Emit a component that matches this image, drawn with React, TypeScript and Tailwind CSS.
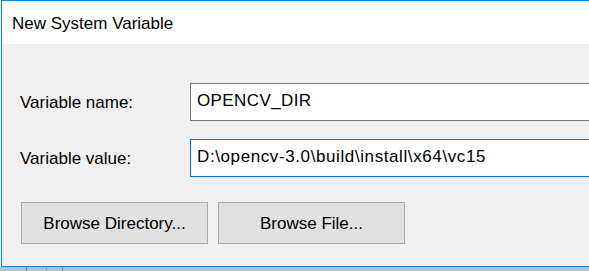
export default function App() {
  return (
    <div className="relative h-[271px] w-[589px] overflow-hidden bg-[#bdbdbd] font-['Liberation_Sans',Arial,sans-serif] text-[17px] leading-[19px] text-black">
      {/* background window edges peeking out below */}
      <div className="absolute bottom-0 left-[26px] h-[4px] w-px bg-[#8a8a8a]" />
      <div className="absolute bottom-0 left-[46px] h-[4px] w-px bg-[#a0a0a0]" />
      <div className="absolute bottom-0 left-[62px] h-[4px] w-px bg-[#8a8a8a]" />
      <div className="absolute left-0 top-0 h-[267px] w-px bg-[#e9eef3]" />

      <div className="ml-px flex h-[267px] flex-col border-b border-l border-t border-[#1883d7] bg-[#f0f0f0]">
        <div className="h-[43px] bg-white pl-[10px] pt-[13px]">New System Variable</div>

        <div className="flex flex-col gap-[18px] pt-[39px]">
          <div className="flex items-center">
            <label className="w-[188px] shrink-0 pl-[18px]">Variable name:</label>
            <div className="-mr-[20px] flex h-[38px] flex-1 items-center border border-[#7a7a7a] bg-white pb-[3px] pl-[6px] tracking-[0.4px]">
              OPENCV_DIR
            </div>
          </div>
          <div className="flex items-center">
            <label className="w-[188px] shrink-0 pl-[18px]">Variable value:</label>
            <div className="-mr-[20px] flex h-[38px] flex-1 items-center border border-[#0078d7] bg-white pb-[3px] pl-[6px] tracking-[0.6px]">
              D:\opencv-3.0\build\install\x64\vc15
            </div>
          </div>
        </div>

        <div className="flex gap-[10px] pl-[19px] pt-[25px]">
          <button className="h-[42px] w-[187px] border border-[#adadad] bg-[#e1e1e1]">Browse Directory...</button>
          <button className="h-[42px] w-[187px] border border-[#adadad] bg-[#e1e1e1]">Browse File...</button>
        </div>
      </div>
    </div>
  );
}
